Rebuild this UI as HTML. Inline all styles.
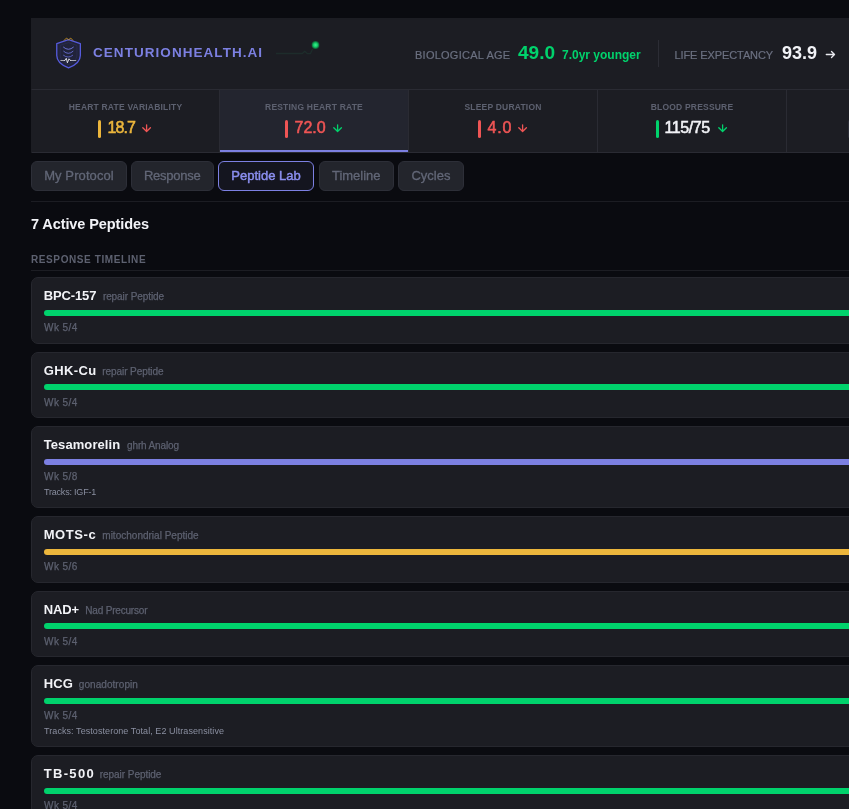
<!DOCTYPE html>
<html lang="en">
<head>
<meta charset="utf-8">
<title>CenturionHealth.AI</title>
<style>
*{box-sizing:border-box;margin:0;padding:0}
html,body{background:#0a0b10;width:849px;height:809px;overflow:hidden}
body{font-family:"Liberation Sans",sans-serif;color:#fff;position:relative}
#wrap{position:absolute;left:31px;top:18px;width:1218px;will-change:transform}
.hdr{height:72px;background:#1c1d23;border:1px solid #1c1d23;border-bottom:1px solid #2a2b33;position:relative}
.logo{position:absolute;left:23px;top:17px;width:28px;height:36px}
.brand{position:absolute;left:61px;top:24.5px;font-size:13.5px;font-weight:700;letter-spacing:1.05px;color:#7c80e2;line-height:18px;white-space:nowrap}
.spark{position:absolute;left:239px;top:15.200px}
.hl,.hv,.hsub{position:absolute;white-space:nowrap;line-height:20px}
.hl{font-size:11px;color:#6b7080;top:26px;-webkit-text-stroke:.2px currentColor}
.hv{font-size:17.5px;font-weight:700;top:23.5px;transform-origin:0 50%;transform:scaleX(1.09)}
.hsub{font-size:12px;font-weight:700;top:25.5px}
.g{color:#00d26c}
.vdiv{position:absolute;left:626px;top:21px;width:1px;height:27px;background:#2c2d35}
.stats{display:flex;height:63px;background:#1c1d23;border-left:1px solid #1c1d23}
.st{width:189px;height:63px;border-right:1px solid #2a2b33;border-bottom:1px solid #2a2b33;text-align:center;position:relative}
.st.on{background:#23252f;box-shadow:inset 0 -2px 0 #7c80e2}
.sl{position:absolute;left:0;right:0;top:11px;font-size:8.5px;font-weight:700;letter-spacing:.2px;color:#5d6170;line-height:12px}
.sv{position:absolute;top:27.5px;font-size:16px;font-weight:400;-webkit-text-stroke:.55px currentColor;line-height:20px;white-space:nowrap}
.bar{position:absolute;top:30px;width:3px;height:18px;border-radius:1.5px}
.ar{position:absolute;top:34px}
.tabs{position:absolute;left:0;top:143px}
.tab{position:absolute;top:0;height:30px;text-align:center;border:1px solid #2d2f38;border-radius:6px;background:#23252c;color:#626777;font-size:13px;line-height:28px;white-space:nowrap;-webkit-text-stroke:.3px currentColor}
.tab.on{background:#14151f;border-color:#7c80e2;color:#8b8ff0;-webkit-text-stroke:.45px currentColor}
.hr{position:absolute;left:0;width:1218px;height:1px;background:#1c1d23}
h2{position:absolute;left:0;top:196.5px;font-size:14.5px;letter-spacing:-.1px;font-weight:700;line-height:18px;color:#f2f3f7;white-space:nowrap}
h3{position:absolute;left:0;top:235.5px;font-size:10px;font-weight:700;letter-spacing:.6px;color:#5d6170;line-height:12px;white-space:nowrap}
.card{position:absolute;left:0;width:1218px;background:#1c1d23;border:1px solid #26272e;border-radius:7px}
.nm{position:absolute;left:11.7px;top:9px;font-size:13px;font-weight:700;color:#f2f3f7;line-height:18px;white-space:nowrap}
.ty{position:absolute;top:11px;font-size:10px;color:#5d6170;-webkit-text-stroke:.25px currentColor;line-height:16px;white-space:nowrap}
.pb{position:absolute;left:12px;top:31.5px;width:1192px;height:6px;border-radius:3px;background:#00d26c}
.wk{position:absolute;left:12px;top:44px;font-size:10px;color:#5d6170;-webkit-text-stroke:.25px currentColor;line-height:12px;letter-spacing:.45px;white-space:nowrap}
.tr{position:absolute;left:12px;top:60px;font-size:9px;color:#8a8fa0;line-height:11px;white-space:nowrap}
</style>
</head>
<body>
<div id="wrap">
  <div class="hdr">
    <svg class="logo" viewBox="0 0 28 36" fill="none">
      <path d="M13.550 3.700 L25.350 7.600 V19.500 C25.350 25.800 19.500 29.600 13.550 31.900 C7.600 29.600 1.750 25.800 1.750 19.500 V7.600 Z" fill="#21233a" stroke="#565bdc" stroke-width="1.300" stroke-linejoin="round"/>
      <path d="M13.550 6.600 L21.900 9.400 V19 C21.900 23.600 18 26.600 13.550 28.600 C9.100 26.600 5.200 23.600 5.200 19 V9.400 Z" stroke="#3a3d78" stroke-width=".5" opacity=".6"/>
      <path d="M9.300 4.200 L11.400 2.100 L13.600 3.700 L15.800 2.100 L17.700 4.200" stroke="#d9a01e" stroke-width=".9" stroke-linejoin="round" stroke-linecap="round" opacity=".9"/>
      <path d="M8.500 11.200 Q13.450 15.600 18.400 11.200" stroke="#7b82f4" stroke-width=".9" stroke-linecap="round" opacity=".9"/>
      <path d="M8.700 15.300 Q13.400 19.600 18 15.300" stroke="#747bf0" stroke-width=".9" stroke-linecap="round" opacity=".85"/>
      <path d="M8.500 19.300 Q13.200 23 17.700 19.300" stroke="#6b72e8" stroke-width=".9" stroke-linecap="round" opacity=".8"/>
      <path d="M5.800 24.500 H9.700" stroke="#b9bac4" stroke-width=".9" stroke-linecap="round"/>
      <path d="M15.600 24.500 H20.800" stroke="#b9bac4" stroke-width=".9" stroke-linecap="round"/>
      <path d="M9.700 24.500 L11.300 22.300 L12.400 26.800 L14 22.800 L15.600 24.500" stroke="#ededf2" stroke-width=".9" stroke-linejoin="round" stroke-linecap="round"/>
    </svg>
    <div class="brand">CENTURIONHEALTH.AI</div>
    <svg class="spark" width="60" height="30" viewBox="0 0 60 30" fill="none">
      <defs><radialGradient id="gd"><stop offset="0" stop-color="#3df08e"/><stop offset=".55" stop-color="#12c765"/><stop offset="1" stop-color="#0a8a45" stop-opacity=".55"/></radialGradient></defs>
      <path d="M5 19.500 H31.300 L33.800 17.200 L36.400 19.700 H39.400 L41.500 15" stroke-linejoin="round" stroke="#1d2c2b" stroke-width="1.300"/>
      <circle cx="44.500" cy="11" r="3.900" fill="url(#gd)"/>
    </svg>
    <span class="hl" style="left:383px;letter-spacing:.25px">BIOLOGICAL AGE</span><span class="hv g" style="left:486px">49.0</span><span class="hsub g" style="left:530px">7.0yr younger</span>
    <div class="vdiv"></div>
    <span class="hl" style="left:642.5px;letter-spacing:-.1px">LIFE EXPECTANCY</span><span class="hv" style="left:750.3px;color:#f2f3f7;transform:scaleX(1.03)">93.9</span><svg style="position:absolute;left:793.1px;top:31.2px" width="11" height="9" viewBox="0 0 11 9" fill="none" stroke="#e8e9ee" stroke-width="1.350" stroke-linecap="round" stroke-linejoin="round"><path d="M1.300 4.500H9.500M6.500 1.500L9.500 4.500L6.500 7.500"/></svg>
  </div>
  <div class="stats">
    <div class="st" style="width:188px"><div class="sl">HEART RATE VARIABILITY</div><i class="bar" style="left:66px;background:#ecb63c"></i><div class="sv" style="left:75.5px;color:#ecb63c;letter-spacing:-.9px">18.7</div><svg class="ar" style="left:110px" width="10" height="9" viewBox="0 0 10 9" fill="none" stroke="#ef5555" stroke-width="1.300" stroke-linecap="round" stroke-linejoin="round"><path d="M4.600 .8V7.300M.8 3.700L4.600 7.500L8.400 3.700"/></svg></div>
    <div class="st on" style="width:189px"><div class="sl">RESTING HEART RATE</div><i class="bar" style="left:65px;background:#ef5555"></i><div class="sv" style="left:74.5px;color:#ef5555;letter-spacing:0">72.0</div><svg class="ar" style="left:113px" width="10" height="9" viewBox="0 0 10 9" fill="none" stroke="#00d26c" stroke-width="1.300" stroke-linecap="round" stroke-linejoin="round"><path d="M4.600 .8V7.300M.8 3.700L4.600 7.500L8.400 3.700"/></svg></div>
    <div class="st" style="width:189px"><div class="sl">SLEEP DURATION</div><i class="bar" style="left:69px;background:#ef5555"></i><div class="sv" style="left:78.5px;color:#ef5555;letter-spacing:.8px">4.0</div><svg class="ar" style="left:109.2px" width="10" height="9" viewBox="0 0 10 9" fill="none" stroke="#ef5555" stroke-width="1.300" stroke-linecap="round" stroke-linejoin="round"><path d="M4.600 .8V7.300M.8 3.700L4.600 7.500L8.400 3.700"/></svg></div>
    <div class="st" style="width:189px"><div class="sl">BLOOD PRESSURE</div><i class="bar" style="left:58px;background:#00d26c"></i><div class="sv" style="left:66.5px;color:#f2f3f7;letter-spacing:-.4px">115/75</div><svg class="ar" style="left:119.8px" width="10" height="9" viewBox="0 0 10 9" fill="none" stroke="#00d26c" stroke-width="1.300" stroke-linecap="round" stroke-linejoin="round"><path d="M4.600 .8V7.300M.8 3.700L4.600 7.500L8.400 3.700"/></svg></div>
    <div class="st"><div class="sl">BODY FAT</div><i class="bar" style="left:61px;background:#2c2e38"></i></div>
  </div>
  <div class="tabs">
    <div class="tab" style="left:0;width:96px;letter-spacing:.1px">My Protocol</div><div class="tab" style="left:100px;width:82.500px;letter-spacing:-.25px">Response</div><div class="tab on" style="left:187px;width:96px">Peptide Lab</div><div class="tab" style="left:287.500px;width:75.500px">Timeline</div><div class="tab" style="left:367px;width:66px">Cycles</div>
  </div>
  <div class="hr" style="top:183px"></div>
  <h2>7 Active Peptides</h2>
  <h3>RESPONSE TIMELINE</h3>
  <div class="hr" style="top:252px"></div>

  <div class="card" style="top:259.25px;height:66.500px"><div class="nm" style="letter-spacing:-0.13px">BPC-157</div><div class="ty" style="left:70.9px;letter-spacing:-0.08px">repair Peptide</div><div class="pb"></div><div class="wk">Wk 5/4</div></div>
  <div class="card" style="top:333.75px;height:66.500px"><div class="nm" style="letter-spacing:0.37px">GHK-Cu</div><div class="ty" style="left:70.3px;letter-spacing:-0.08px">repair Peptide</div><div class="pb"></div><div class="wk">Wk 5/4</div></div>
  <div class="card" style="top:408.25px;height:82px"><div class="nm" style="letter-spacing:0.09px">Tesamorelin</div><div class="ty" style="left:95.1px;letter-spacing:-0.15px">ghrh Analog</div><div class="pb" style="background:#7c80e2"></div><div class="wk">Wk 5/8</div><div class="tr" style="letter-spacing:-.2px">Tracks: IGF-1</div></div>
  <div class="card" style="top:498.25px;height:66.500px"><div class="nm" style="letter-spacing:0.58px">MOTS-c</div><div class="ty" style="left:70.3px;letter-spacing:0.01px">mitochondrial Peptide</div><div class="pb" style="background:#ecb63c"></div><div class="wk">Wk 5/6</div></div>
  <div class="card" style="top:572.75px;height:66.500px"><div class="nm" style="letter-spacing:-0.09px">NAD+</div><div class="ty" style="left:53.3px;letter-spacing:-0.19px">Nad Precursor</div><div class="pb"></div><div class="wk">Wk 5/4</div></div>
  <div class="card" style="top:647.25px;height:82px"><div class="nm" style="letter-spacing:0.15px">HCG</div><div class="ty" style="left:46.8px;letter-spacing:0.06px">gonadotropin</div><div class="pb"></div><div class="wk">Wk 5/4</div><div class="tr" style="letter-spacing:.07px">Tracks: Testosterone Total, E2 Ultrasensitive</div></div>
  <div class="card" style="top:737.25px;height:66.500px"><div class="nm" style="letter-spacing:1.33px">TB-500</div><div class="ty" style="left:67.7px;letter-spacing:-0.04px">repair Peptide</div><div class="pb"></div><div class="wk">Wk 5/4</div></div>
</div>
</body>
</html>
